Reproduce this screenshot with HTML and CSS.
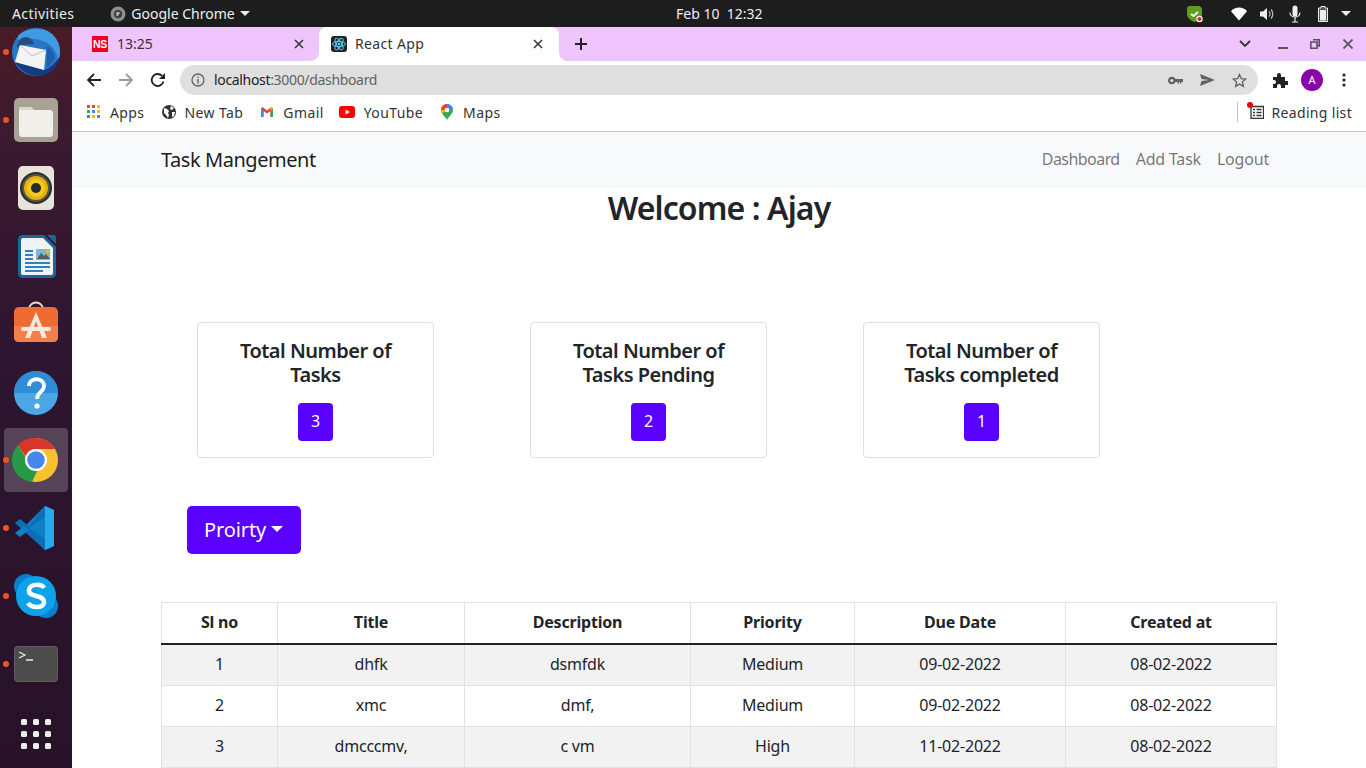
FILE: index.html
```html
<!DOCTYPE html>
<html lang="en">
<head>
<meta charset="utf-8">
<title>React App</title>
<link rel="stylesheet" href="styles.css">
</head>
<body>
<header class="topbar">
  <div class="top-left">
    <span class="activities">Activities</span>
    <span class="app-menu">
      <svg class="ic14" viewBox="0 0 16 16"><circle cx="8" cy="8" r="7.5" fill="#8d8d8d"/><circle cx="8" cy="8" r="4" fill="#3a3a3a"/><circle cx="8" cy="8" r="2.2" fill="#aaa"/><path d="M8 12 L10 8" stroke="#3a3a3a" stroke-width="1.5"/></svg>
      <span>Google Chrome</span><i class="caret"></i>
    </span>
  </div>
  <div class="clock">Feb 10&nbsp;&nbsp;12:32</div>
  <div class="tray">
    <svg class="t-shield" width="18" height="18" viewBox="0 0 18 18"><path d="M4 1h8c3 0 4 2 4 4v4c0 4-4 7-7 8-4-1-8-4-8-8V4c0-2 1-3 3-3z" fill="#5d9e1f"/><path d="M5 9l2.5 2L12 7" fill="none" stroke="#fff" stroke-width="1.8"/><circle cx="13.500" cy="14" r="3.200" fill="#fff"/><circle cx="13.500" cy="14" r="2.100" fill="#e4202a"/></svg>
    <svg class="t-wifi" width="16" height="14" viewBox="0 0 16 14"><path d="M0 4.200C4-.6 12-.6 16 4.200L8 13.500z" fill="#fff"/></svg>
    <svg class="t-vol" width="16" height="14" viewBox="0 0 16 14"><path d="M0 4.500h3L7 1v12L3 9.500H0z" fill="#eee"/><path d="M9 4.500a3.500 3.500 0 0 1 0 5M11 2.500a6.500 6.500 0 0 1 0 9" fill="none" stroke="#bbb" stroke-width="1.200"/></svg>
    <svg class="t-mic" width="12" height="18" viewBox="0 0 12 18"><rect x="3.500" y="0.500" width="5" height="11" rx="2.500" fill="#eee"/><path d="M1 7.500c0 6 10 6 10 0M6 12.500v4M3 17h6" fill="none" stroke="#eee" stroke-width="1.200"/></svg>
    <svg class="t-bat" width="10" height="16" viewBox="0 0 10 16"><path d="M3 .5h4v1.500h2.500v13.500H.5V2H3z" fill="#555" stroke="#eee"/><rect x="2" y="4" width="6" height="10.500" fill="#eee"/></svg>
    <i class="caret"></i>
  </div>
</header>

<div class="desktop">
  <nav class="dock">
    <div class="dock-item running">
      <svg viewBox="0 0 48 48"><circle cx="24" cy="24" r="24" fill="#2a76c6"/><path d="M6 8C13 0 31-3 41 7c5 5 7 11 7 17 0 3-1 7-2 9-1-9-6-17-15-20C22 10 13 10 6 12z" fill="#3f9be2"/><path d="M3 34c5 9 15 14 24 14 11-1 20-10 21-20-3 5-9 12-16 14z" fill="#123b84"/><path d="M35 18c5 3 8 8 7 14l-7 8z" fill="#1c5fb0"/><path d="M8 17 34 22 32 42 3 34z" fill="#f4f4f4"/><path d="M8 17l12 11 14-6" fill="none" stroke="#bfbfbf" stroke-width="1"/><path d="M5 20c0-6 3-10 8-11 5 0 8 3 9 7l-14 1z" fill="#274b80"/></svg>
    </div>
    <div class="dock-item running">
      <svg viewBox="0 0 48 48"><rect x="2" y="2" width="44" height="44" rx="5" fill="#a8a294"/><path d="M7 14c0-2 1-3 3-3h9l3 3h16c2 0 3 1 3 3v20c0 3-1 4-3 4H10c-2 0-3-1-3-4z" fill="#f1efe9"/><path d="M7 14c0-2 1-3 3-3h9l3 3z" fill="#dcd7cb"/></svg>
    </div>
    <div class="dock-item">
      <svg viewBox="0 0 48 48"><rect x="6" y="2" width="36" height="44" rx="5" fill="#e6e3d9"/><circle cx="24" cy="24" r="16" fill="#2c2b2c"/><circle cx="24" cy="24" r="14" fill="#55534f"/><circle cx="24" cy="24" r="12" fill="#e3b20c"/><circle cx="24" cy="24" r="9" fill="#f3ca1e"/><circle cx="24" cy="24" r="5" fill="#2a2a2a"/></svg>
    </div>
    <div class="dock-item">
      <svg viewBox="0 0 48 48"><path d="M10 3h22l12 12v26c0 3-2 5-5 5H11c-3 0-5-2-5-5V7c0-2 2-4 4-4z" fill="#18679c"/><path d="M11 6h20l10 10v25c0 1-1 2-2 2H11c-1 0-2-1-2-2V8c0-1 1-2 2-2z" fill="#f1f4f6"/><path d="M35 3h7c1 0 2 1 2 2v7z" fill="#18679c"/><path d="M13 18h8v2h-8zM13 22h8v2h-8zM13 26h8v2h-8zM13 30h25v2H13zM13 34h25v2H13zM13 38h18v2H13z" fill="#2a83bb"/><rect x="24" y="17" width="14" height="11" fill="#7fb6d8"/><path d="M25 27l4-6 3 3 2-2 4 5z" fill="#5d5d5d"/><rect x="34" y="18" width="3" height="3" fill="#eebb33"/></svg>
    </div>
    <div class="dock-item">
      <svg viewBox="0 0 48 48"><path d="M17 10c0-10 14-10 14 0" fill="none" stroke="#efd9bf" stroke-width="2"/><rect x="2" y="7" width="44" height="35" rx="5" fill="#ee6c33"/><path d="M2 26h44v11c0 3-2 5-5 5H7c-3 0-5-2-5-5z" fill="#f47f4a"/><path d="M24 12 13 38h5l6-17 6 17h5z" fill="#fbeadd"/><rect x="9" y="27" width="30" height="4" rx="2" fill="#fbeadd"/></svg>
    </div>
    <div class="dock-item">
      <svg viewBox="0 0 48 48"><circle cx="24" cy="25" r="22" fill="#4aa6e6"/><path d="M2 25a22 22 0 0 1 44 0z" fill="#2f8cd6"/><path d="M17 18c0-9 15-9 15 0 0 6-7 6-7 13" fill="none" stroke="#fff" stroke-width="3.800"/><circle cx="25" cy="38" r="2.600" fill="#fff"/></svg>
    </div>
    <div class="dock-item running active">
      <svg viewBox="0 0 48 48"><circle cx="24" cy="24" r="22" fill="#fbc02d"/><path d="M24 2a22 22 0 0 1 19 11H24a11 11 0 0 0-10.500 7.500L6 9a22 22 0 0 1 18-7z" fill="#d9362b"/><path d="M6 9l9 15a10 10 0 0 0 13 5L20 46A22 22 0 0 1 6 9z" fill="#279a48"/><circle cx="24" cy="24" r="11" fill="#fff"/><circle cx="24" cy="24" r="8.800" fill="#4a86e8"/></svg>
    </div>
    <div class="dock-item running">
      <svg viewBox="0 0 48 48"><path d="M33 2 11 24l22 22 9-4V6z" fill="#0f7fc8"/><path d="M33 2l9 4v36l-9 4z" fill="#28a8ee"/><path d="M33 13 17 24l16 11v11L3 19l5-4 9 7L33 2z" fill="#0a6fb4"/><path d="M3 29l5 4 9-7-5-4z" fill="#0f7fc8"/></svg>
    </div>
    <div class="dock-item running">
      <svg viewBox="0 0 48 48"><circle cx="14" cy="14" r="12" fill="#0a7fd0"/><circle cx="34" cy="34" r="12" fill="#0a7fd0"/><circle cx="24" cy="24" r="20" fill="#0ea2e8"/><path d="M32 16c-2-4-14-5-15 2-1 8 15 4 15 12 0 7-13 6-16 1" fill="none" stroke="#fff" stroke-width="4.500"/></svg>
    </div>
    <div class="dock-item running">
      <svg viewBox="0 0 48 48"><rect x="2" y="6" width="44" height="36" rx="4" fill="#4c4c4c"/><rect x="2.500" y="6.500" width="43" height="35" rx="4" fill="none" stroke="#5f5f5f"/><path d="M7 12l6 3-6 3" fill="none" stroke="#eee" stroke-width="1.200"/><path d="M14 20h7" stroke="#eee" stroke-width="1.500"/></svg>
    </div>
    <div class="dock-apps">
      <i></i><i></i><i></i><i></i><i></i><i></i><i></i><i></i><i></i>
    </div>
  </nav>

  <div class="browser">
    <div class="tabstrip">
      <div class="tab">
        <span class="ns">NS</span>
        <span class="tab-title">13:25</span>
        <svg class="tab-x" width="10" height="10" viewBox="0 0 10 10"><path d="M1 1l8 8M9 1l-8 8" stroke="#333" stroke-width="1.500"/></svg>
      </div>
      <div class="tab tab-active">
        <svg class="fav" width="16" height="16" viewBox="0 0 16 16"><rect width="16" height="16" rx="3" fill="#20232a"/><g fill="none" stroke="#61dafb" stroke-width=".9"><ellipse cx="8" cy="8" rx="6.500" ry="2.600"/><ellipse cx="8" cy="8" rx="6.500" ry="2.600" transform="rotate(60 8 8)"/><ellipse cx="8" cy="8" rx="6.500" ry="2.600" transform="rotate(120 8 8)"/></g><circle cx="8" cy="8" r="1.300" fill="#61dafb"/></svg>
        <span class="tab-title">React App</span>
        <svg class="tab-x" width="10" height="10" viewBox="0 0 10 10"><path d="M1 1l8 8M9 1l-8 8" stroke="#333" stroke-width="1.500"/></svg>
      </div>
      <svg class="newtab" width="14" height="14" viewBox="0 0 14 14"><path d="M7 1v12M1 7h12" stroke="#222" stroke-width="2"/></svg>
      <div class="win-controls">
        <svg class="chev" width="12" height="8" viewBox="0 0 12 8"><path d="M1 1l5 5 5-5" fill="none" stroke="#333" stroke-width="1.800"/></svg>
        <svg class="w-min" width="10" height="10" viewBox="0 0 10 10"><path d="M0 9h10" stroke="#555" stroke-width="2"/></svg>
        <svg class="w-max" width="10" height="10" viewBox="0 0 10 10"><path d="M3 .8h6.200V7H7M.8 3h6.200v6.200H.8z" fill="none" stroke="#555" stroke-width="1.600"/></svg>
        <svg class="w-x" width="10" height="10" viewBox="0 0 10 10"><path d="M.5.500l9 9M9.500.500l-9 9" stroke="#555" stroke-width="1.800"/></svg>
      </div>
    </div>

    <div class="toolbar">
      <svg width="16" height="16" viewBox="0 0 16 16"><path d="M15 8H2M8 2 2 8l6 6" fill="none" stroke="#222" stroke-width="1.800"/></svg>
      <svg width="16" height="16" viewBox="0 0 16 16"><path d="M1 8h13M8 2l6 6-6 6" fill="none" stroke="#9a9a9a" stroke-width="1.800"/></svg>
      <svg width="16" height="16" viewBox="0 0 16 16"><path d="M13.500 9.500A6 6 0 1 1 12 3.800" fill="none" stroke="#222" stroke-width="1.800"/><path d="M15 1v6H9z" fill="#222"/></svg>
      <div class="omnibox">
        <svg width="14" height="14" viewBox="0 0 14 14"><circle cx="7" cy="7" r="6" fill="none" stroke="#5f6368" stroke-width="1.300"/><path d="M7 6v4.500M7 3.500v1.500" stroke="#5f6368" stroke-width="1.400"/></svg>
        <span class="url"><span class="host">localhost</span>:3000/dashboard</span>
        <svg class="o-key" width="15" height="9" viewBox="0 0 15 9"><circle cx="3.800" cy="4.500" r="2.700" fill="none" stroke="#5f6368" stroke-width="2.200"/><path d="M6 3h9v3h-1.500v1.500H12V6h-1v1.500H9.500V6H6z" fill="#5f6368"/></svg>
        <svg class="o-send" width="15" height="12" viewBox="0 0 15 12"><path d="M0 0l15 6-15 6 1.500-5L9 6 1.500 5z" fill="#5f6368"/></svg>
        <svg class="o-star" width="15" height="15" viewBox="0 0 15 15"><path d="M7.500 1.500l1.800 4.100 4.500.4-3.400 3 1 4.400-3.900-2.300-3.900 2.300 1-4.400-3.400-3 4.500-.4z" fill="none" stroke="#5f6368" stroke-width="1.300"/></svg>
      </div>
      <svg class="ext" width="16" height="16" viewBox="0 0 16 16"><path d="M1 5h4V3a2 2 0 0 1 4 0v2h4v4h2a2 2 0 0 1 0 4h-2v3H9v-2a2 2 0 0 0-4 0v2H1v-4h1a2 2 0 0 0 0-4H1z" fill="#222"/></svg>
      <span class="avatar">A</span>
      <svg class="dots" width="4" height="14" viewBox="0 0 4 14"><circle cx="2" cy="2" r="1.600" fill="#222"/><circle cx="2" cy="7" r="1.600" fill="#222"/><circle cx="2" cy="12" r="1.600" fill="#222"/></svg>
    </div>

    <div class="bookmarks">
      <span class="bm">
        <svg width="14" height="14" viewBox="0 0 14 14"><rect x="0" y="0" width="3" height="3" fill="#ea4335"/><rect x="5" y="0" width="3" height="3" fill="#ea4335"/><rect x="10" y="0" width="3" height="3" fill="#fbbc04"/><rect x="0" y="5" width="3" height="3" fill="#34a853"/><rect x="5" y="5" width="3" height="3" fill="#4285f4"/><rect x="10" y="5" width="3" height="3" fill="#fbbc04"/><rect x="0" y="10" width="3" height="3" fill="#34a853"/><rect x="5" y="10" width="3" height="3" fill="#fbbc04"/><rect x="10" y="10" width="3" height="3" fill="#4285f4"/></svg>
        Apps
      </span>
      <span class="bm bm-newtab">
        <svg width="14" height="14" viewBox="0 0 14 14"><circle cx="7" cy="7" r="7" fill="#333"/><path d="M2 3l3 1 2 2-1 2 1 2-1 3-2-3-2-2zM9 1l3 2-2 2-2-1zM10 7h3l-1 4-2 1z" fill="#fff"/></svg>
        New Tab
      </span>
      <span class="bm">
        <svg width="14" height="14" viewBox="0 0 14 14"><path d="M1 3.500V12h2.500V6L7 8.500 10.500 6v6H13V3.500L11.500 2 7 5.500 2.500 2z" fill="#ea4335"/><path d="M1 3.500V12h2.500V6z" fill="#4285f4"/><path d="M13 3.500V12h-2.500V6z" fill="#34a853"/><path d="M11.500 2 13 3.500 10.500 6V4z" fill="#fbbc04"/></svg>
        Gmail
      </span>
      <span class="bm bm-yt">
        <svg width="16" height="12" viewBox="0 0 16 12"><rect width="16" height="12" rx="3" fill="#f00"/><path d="M6.500 3.500v5L11 6z" fill="#fff"/></svg>
        YouTube
      </span>
      <span class="bm bm-maps">
        <svg width="12" height="16" viewBox="0 0 12 16"><path d="M6 0a6 6 0 0 1 6 6c0 4-4 6-6 10C4 12 0 10 0 6a6 6 0 0 1 6-6z" fill="#34a853"/><path d="M6 0a6 6 0 0 1 6 6H6z" fill="#4285f4"/><path d="M6 0a6 6 0 0 0-6 6h6z" fill="#ea4335"/><path d="M0 6c0 1 .5 2.500 1 3.500L6 6z" fill="#fbbc04"/><circle cx="6" cy="6" r="2.300" fill="#fff"/></svg>
        Maps
      </span>
      <span class="reading">
        <i class="sep"></i>
        <span class="rl-icon">
          <svg width="14" height="14" viewBox="0 0 14 14"><path d="M1 1.500h12.500v12H1z" fill="none" stroke="#333" stroke-width="1.300"/><path d="M3 4.500h2M6.500 4.500h5M3 7.500h2M6.500 7.500h5M3 10.500h2M6.500 10.500h5" stroke="#333" stroke-width="1.300"/></svg>
          <i class="rl-dot"></i>
        </span>
        Reading list
      </span>
    </div>

    <main class="page">
      <div class="navbar">
        <div class="container nav-inner">
          <span class="brand">Task Mangement</span>
          <div class="nav-links">
            <a class="nav-dash">Dashboard</a><a>Add Task</a><a>Logout</a>
          </div>
        </div>
      </div>
      <h2 class="welcome">Welcome : Ajay</h2>
      <div class="container">
        <section class="cards">
          <div class="card"><h5>Total Number of Tasks</h5><span class="count">3</span></div>
          <div class="card"><h5>Total Number of Tasks Pending</h5><span class="count">2</span></div>
          <div class="card"><h5>Total Number of Tasks completed</h5><span class="count">1</span></div>
        </section>
        <button class="priority">Proirty<i class="btn-caret"></i></button>
        <table class="tasks">
          <thead>
            <tr><th class="c1">Sl no</th><th class="c2">Title</th><th class="c3">Description</th><th class="c4">Priority</th><th class="c5">Due Date</th><th class="c6">Created at</th></tr>
          </thead>
          <tbody>
            <tr><td>1</td><td>dhfk</td><td>dsmfdk</td><td>Medium</td><td>09-02-2022</td><td>08-02-2022</td></tr>
            <tr><td>2</td><td>xmc</td><td>dmf,</td><td>Medium</td><td>09-02-2022</td><td>08-02-2022</td></tr>
            <tr><td>3</td><td>dmcccmv,</td><td>c vm</td><td>High</td><td>11-02-2022</td><td>08-02-2022</td></tr>
          </tbody>
        </table>
      </div>
    </main>
  </div>
</div>
</body>
</html>
```
FILE: styles.css
```css
* { box-sizing: border-box; }
html, body { height: 100%; }
body {
  margin: 0;
  height: 768px;
  overflow: hidden;
  display: flex;
  flex-direction: column;
  font-family: "Noto Sans", "Open Sans", sans-serif;
  color: #212529;
  background: #fff;
}
svg { display: block; flex: none; }

/* Ubuntu top bar */
.topbar {
  height: 27px;
  flex: none;
  background: #1d1d1d;
  color: #eee;
  font-size: 14px;
  display: grid;
  grid-template-columns: 664px auto 1fr;
  align-items: center;
  padding: 0 12px;
}
.top-left { display: flex; align-items: center; gap: 36px; }
.activities { letter-spacing: .4px; }
.app-menu { display: flex; align-items: center; gap: 5px; }
.caret {
  display: block;
  width: 0; height: 0;
  border-left: 5px solid transparent;
  border-right: 5px solid transparent;
  border-top: 5px solid #eee;
}
.ic14 { width: 16px; height: 16px; }
.tray { display: flex; align-items: center; justify-content: flex-end; gap: 13px; padding-right: 3px; }
.t-shield { margin-right: 14px; }
.t-mic { margin-right: 4px; }

.desktop { flex: 1; display: flex; min-height: 0; }

/* Dock */
.dock {
  width: 72px;
  flex: none;
  background: linear-gradient(180deg, #4a1b27 0%, #3b1a2f 15%, #2e1530 45%, #271228 100%);
  display: flex;
  flex-direction: column;
  align-items: center;
  gap: 20px;
  padding-top: 1px;
}
.dock-item { position: relative; width: 48px; height: 48px; }
.dock-item svg { width: 48px; height: 48px; position: relative; }
.dock-item.running::after {
  content: "";
  position: absolute;
  left: -9px; top: 21px;
  width: 6px; height: 6px;
  border-radius: 50%;
  background: #e95420;
}
.dock-item.active::before {
  content: "";
  position: absolute;
  left: -8px; top: -8px;
  width: 64px; height: 64px;
  border-radius: 4px;
  background: rgba(255, 255, 255, .2);
}
.dock-apps {
  display: grid;
  grid-template-columns: repeat(3, 6px);
  gap: 6px;
  margin-top: 11px;
}
.dock-apps i { width: 6px; height: 6px; border-radius: 1.500px; background: #eee; }

/* Chrome */
.browser { flex: 1; min-width: 0; display: flex; flex-direction: column; }
.tabstrip {
  height: 34px;
  flex: none;
  background: #f0c4fd;
  display: flex;
  align-items: center;
  font-size: 14px;
  color: #333;
}
.tab {
  width: 247px;
  height: 34px;
  display: flex;
  align-items: center;
  gap: 9px;
  padding: 0 15px 0 20px;
}
.tab-title { flex: 1; padding-bottom: 2px; }
.tab-active {
  width: 240px;
  background: #fff;
  border-radius: 8px 8px 0 0;
  padding: 0 16px 0 12px;
  gap: 8px;
  position: relative;
}
.tab-active .tab-title { letter-spacing: .35px; }
.tab-active::before, .tab-active::after {
  content: "";
  position: absolute;
  bottom: 0;
  width: 8px; height: 8px;
}
.tab-active::before { left: -8px; background: radial-gradient(circle at 0 0, transparent 7.500px, #fff 8px); }
.tab-active::after { right: -8px; background: radial-gradient(circle at 100% 0, transparent 7.500px, #fff 8px); }
.ns {
  width: 16px; height: 16px;
  background: #f0001d;
  color: #fff;
  font: 700 10.500px/16px "Liberation Sans", sans-serif;
  letter-spacing: -.4px;
  text-align: center;
}
.newtab { margin-left: 15px; }
.win-controls { margin-left: auto; display: flex; align-items: center; padding-right: 13px; }
.w-min { margin-left: 27px; }
.w-max { margin-left: 22px; }
.w-x { margin-left: 23px; }

.toolbar {
  height: 34px;
  flex: none;
  background: #fff;
  display: flex;
  align-items: center;
  gap: 16px;
  padding: 4px 0 0 14px;
}
.omnibox {
  width: 1078px;
  height: 30px;
  margin-left: -2px;
  border-radius: 15px;
  background: #dfdfdf;
  display: flex;
  align-items: center;
  padding: 0 11px;
  font-size: 14px;
  color: #5f6368;
  gap: 9px;
}
.url { flex: 1; letter-spacing: -.33px; padding-bottom: 2px; }
.host { color: #222; }
.o-key { margin-right: 8px; }
.o-send { margin-right: 8px; }
.toolbar .ext { margin-left: -2px; margin-right: -3px; }
.avatar {
  width: 22px; height: 22px;
  border-radius: 50%;
  background: #8a04a8;
  color: #fff;
  font-size: 11px;
  line-height: 22px;
  text-align: center;
}
.dots { margin-left: 3px; }

.bookmarks {
  height: 37px;
  flex: none;
  background: #fff;
  border-bottom: 1px solid #c8c8c8;
  display: flex;
  align-items: center;
  padding: 0 0 2px 15px;
  gap: 17px;
  font-size: 14px;
  letter-spacing: .4px;
  color: #333;
}
.bm { display: flex; align-items: center; gap: 9px; }
.bm-newtab { margin-left: 1px; gap: 8px; }
.bm-yt { margin-left: -2px; }
.bm-maps { margin-left: 1px; gap: 10px; }
.reading { margin-left: auto; display: flex; align-items: center; gap: 8px; padding-right: 14px; letter-spacing: .32px; }
.sep { width: 1px; height: 20px; background: #c0c0c0; margin-right: 4px; }
.rl-icon { position: relative; }
.rl-dot {
  position: absolute;
  left: -3px; top: -3px;
  width: 6px; height: 6px;
  border-radius: 50%;
  background: #e00;
}

/* Page */
.page { flex: 1; min-height: 0; overflow: hidden; }
.container { width: 1116px; margin: 0 auto; }
.navbar { height: 56px; background: #f8f9fa; }
.nav-inner { height: 100%; display: flex; align-items: center; justify-content: space-between; padding-bottom: 2px; }
.brand { font-size: 20px; letter-spacing: -.45px; color: rgba(0, 0, 0, .9); }
.nav-links { display: flex; gap: 16px; padding-right: 8px; font-size: 16px; letter-spacing: -.2px; color: rgba(0, 0, 0, .55); }
.nav-dash { letter-spacing: -.55px; }
.welcome {
  margin: 0;
  height: 40px;
  text-align: center;
  font-size: 32px;
  line-height: 40px;
  font-weight: 600;
  letter-spacing: -.9px;
}
.cards { display: flex; gap: 96px; padding: 94px 0 0 36px; }
.card {
  width: 237px;
  height: 136px;
  border: 1px solid #dfdfdf;
  border-radius: 4px;
  padding: 16px 16px 0;
  text-align: center;
}
.card h5 {
  margin: 0 0 16px;
  font-size: 20px;
  line-height: 24px;
  font-weight: 600;
  letter-spacing: -.5px;
}
.count {
  display: inline-block;
  width: 35px;
  height: 38px;
  border-radius: 4px;
  background: #5900ff;
  color: #fff;
  font-size: 16px;
  line-height: 37px;
}
.priority {
  display: flex;
  align-items: center;
  margin: 48px 0 48px 26px;
  width: 114px;
  height: 48px;
  padding: 0 0 1px 17px;
  border: 0;
  border-radius: 5px;
  background: #5900ff;
  color: #fff;
  font-family: inherit;
  font-size: 20px;
  letter-spacing: -.1px;
}
.btn-caret {
  margin-left: 5px;
  margin-bottom: 1px;
  width: 0; height: 0;
  border-left: 6px solid transparent;
  border-right: 6px solid transparent;
  border-top: 6px solid #fff;
}
.tasks {
  width: 1115px;
  table-layout: fixed;
  border-collapse: collapse;
  font-size: 16px;
  line-height: 24px;
  letter-spacing: -.2px;
  text-align: center;
}
.tasks th, .tasks td { border: 1px solid #dee2e6; padding: 7px 8px 9px; }
.tasks th { border-bottom: 2px solid #212529; font-weight: 700; }
.tasks tbody tr:nth-child(odd) { background: #f2f2f2; }
.c1 { width: 116px; }
.c2 { width: 187px; }
.c3 { width: 226px; }
.c4 { width: 164px; }
.c5 { width: 211px; }
.c6 { width: 211px; }
```
